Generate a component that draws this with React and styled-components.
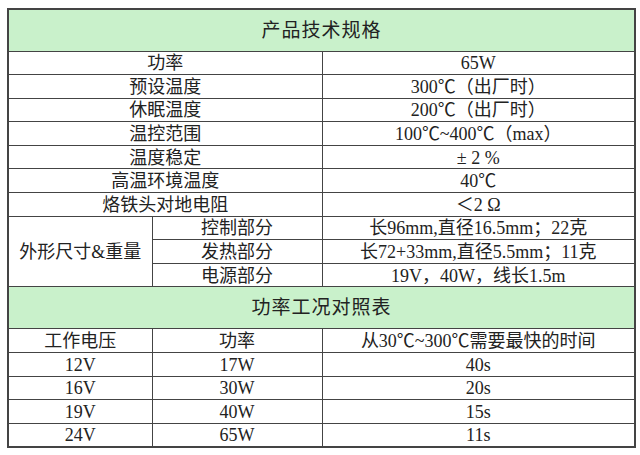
import React from 'react'
import styled, { createGlobalStyle } from 'styled-components'

const GlobalStyle = createGlobalStyle`
body {
  margin: 0;
  background: #fff;
}
`

const specRows = [
  ['功率', '65W'],
  ['预设温度', '300℃（出厂时）'],
  ['休眠温度', '200℃（出厂时）'],
  ['温控范围', '100℃~400℃（max）'],
  ['温度稳定', '± 2 %'],
  ['高温环境温度', '40℃'],
  ['烙铁头对地电阻', '＜2 Ω'],
]

const sizeRows = [
  ['控制部分', '长96mm,直径16.5mm；22克'],
  ['发热部分', '长72+33mm,直径5.5mm；11克'],
  ['电源部分', '19V，40W，线长1.5m'],
]

const powerRows = [
  ['12V', '17W', '40s'],
  ['16V', '30W', '20s'],
  ['19V', '40W', '15s'],
  ['24V', '65W', '11s'],
]

export default function App() {
  return (
    <Page>
      <GlobalStyle />
      <Table>
        <colgroup>
          <col style={{ width: 144 }} />
          <col style={{ width: 170 }} />
          <col style={{ width: 313 }} />
        </colgroup>
        <tbody>
          <Row tall>
            <Title colSpan={3}>产品技术规格</Title>
          </Row>
          {specRows.map(([label, value]) => (
            <Row key={label}>
              <Cell colSpan={2}>{label}</Cell>
              <Cell>{value}</Cell>
            </Row>
          ))}
          {sizeRows.map(([part, value], i) => (
            <Row key={part}>
              {i === 0 ? <Cell rowSpan={3}>外形尺寸&amp;重量</Cell> : null}
              <Cell>{part}</Cell>
              <Cell>{value}</Cell>
            </Row>
          ))}
          <Row tall>
            <Title colSpan={3}>功率工况对照表</Title>
          </Row>
          <Row>
            <Cell>工作电压</Cell>
            <Cell>功率</Cell>
            <Cell>从30℃~300℃需要最快的时间</Cell>
          </Row>
          {powerRows.map(([volt, watt, time]) => (
            <Row key={volt}>
              <Cell>{volt}</Cell>
              <Cell>{watt}</Cell>
              <Cell>{time}</Cell>
            </Row>
          ))}
        </tbody>
      </Table>
    </Page>
  )
}

const Page = styled.div`
padding: 8px 0 0 7px;
`
const Table = styled.table`
width: 627px;
table-layout: fixed;
border-collapse: collapse;
border: 2px solid #444;
font-family: "Liberation Serif", "Noto Sans CJK SC", serif;
color: #222;
`
const Row = styled.tr`
height: ${props => props.tall ? '42px' : '23.6px'};
`
const Cell = styled.td`
border: 1px solid #444;
padding: 1px 0 0;
text-align: center;
vertical-align: middle;
font-size: 18px;
line-height: 20px;
white-space: nowrap;
`
const Title = styled(Cell)`
background: #c9f1cb;
font-size: 19px;
font-weight: 400;
letter-spacing: 1px;
`
